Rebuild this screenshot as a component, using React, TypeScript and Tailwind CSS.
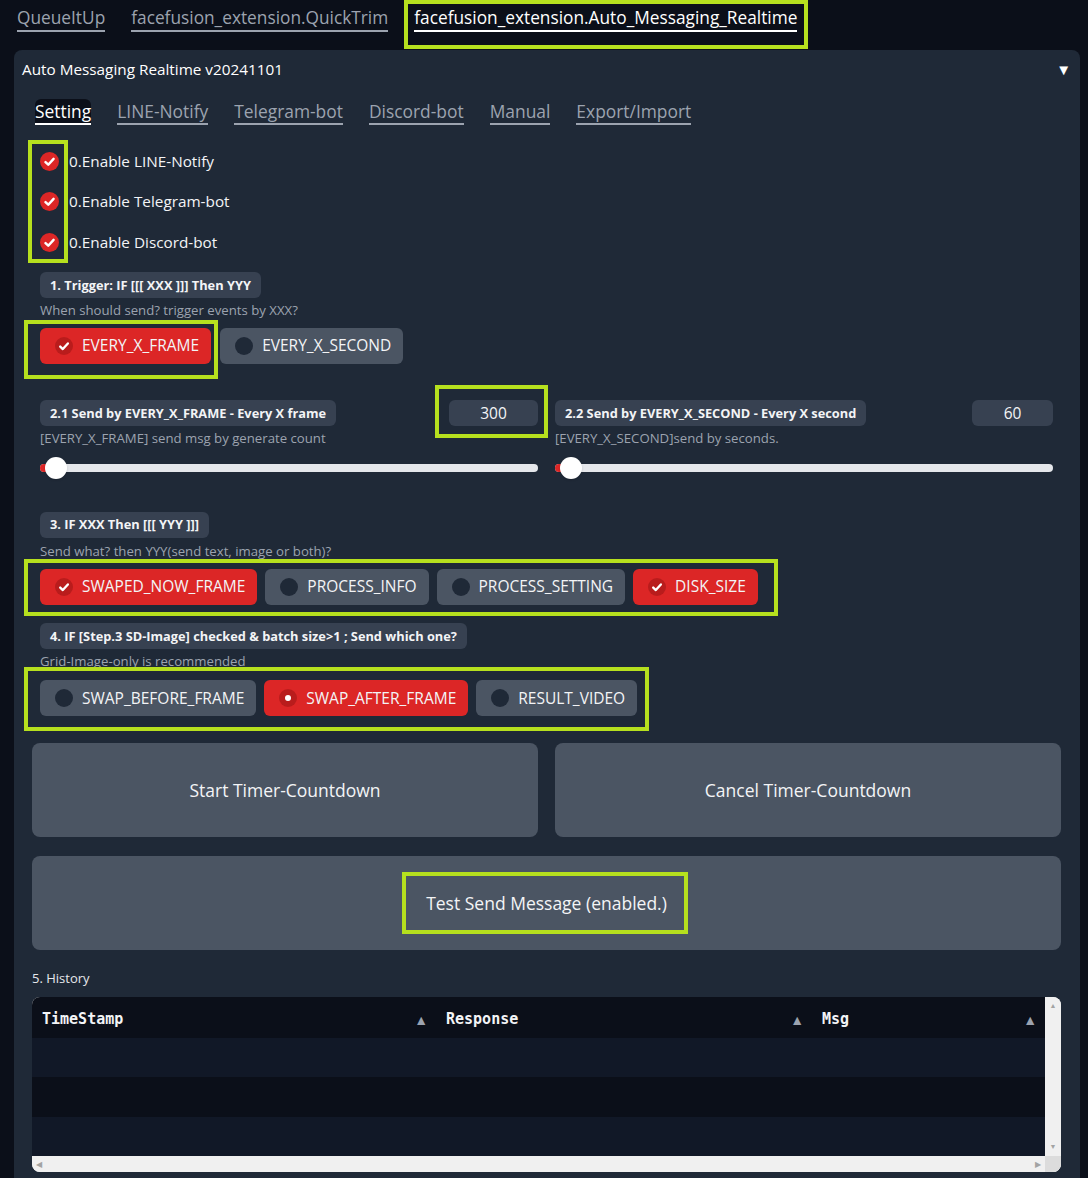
import React from "react";
import clsx from "clsx";

const Check = () => (
  <svg viewBox="0 0 20 20" className="h-full w-full">
    <path
      d="M5.8 10.6l2.9 2.8 5.6-6.2"
      fill="none"
      stroke="white"
      strokeWidth="2.6"
      strokeLinecap="round"
      strokeLinejoin="round"
    />
  </svg>
);

function Option({ label, on, radio }: { label: string; on?: boolean; radio?: boolean }) {
  return (
    <div
      className={clsx(
        "flex h-[36px] items-center gap-[9px] rounded-md pl-[15px] pr-[12px] text-[15.5px] text-[#f3f4f6]",
        on ? "bg-[#dc2626]" : "bg-[#4b5563]"
      )}
    >
      <span
        className={clsx(
          "flex h-[18px] w-[18px] items-center justify-center rounded-full",
          on ? "bg-[#b91c1c]" : "bg-[#1f2937]"
        )}
      >
        {on && (radio ? <span className="h-[6px] w-[6px] rounded-full bg-white" /> : <Check />)}
      </span>
      {label}
    </div>
  );
}

function Label({ children }: { children: React.ReactNode }) {
  return (
    <div className="inline-flex h-[26px] items-center rounded-md bg-[#374151] px-[10px] text-[12.8px] font-bold text-[#f3f4f6]">
      {children}
    </div>
  );
}

function Info({ children }: { children: React.ReactNode }) {
  return <div className="text-[13.2px] leading-[18px] text-[#9ca3af]">{children}</div>;
}

function Slider({ label, info, value, inputW }: { label: string; info: string; value: string; inputW: string }) {
  return (
    <div className="flex flex-col">
      <div className="flex items-start justify-between">
        <Label>{label}</Label>
        <div className="relative">
          <div
            className={clsx(
              "flex h-[26px] items-center justify-center rounded-md bg-[#374151] pt-[1px] text-[15.5px] text-[#f3f4f6]",
              inputW
            )}
          >
            {value}
          </div>
          {value === "300" && (
            <div className="pointer-events-none absolute -left-[14px] -right-[10px] -top-[15px] -bottom-[12px] border-4 border-[#b6e01e]" />
          )}
        </div>
      </div>
      <div className="mt-[3px]">
        <Info>{info}</Info>
      </div>
      <div className="relative mt-[10px] h-[22px]">
        <div className="absolute left-0 right-0 top-[7px] h-[8px] rounded-full bg-[#e5e7eb]" />
        <div className="absolute left-0 top-[7px] h-[8px] w-[10px] rounded-l-full bg-[#dc2626]" />
        <div className="absolute left-[5px] top-0 h-[22px] w-[22px] rounded-full bg-white shadow-sm" />
      </div>
    </div>
  );
}

const HeadCell = ({ children }: { children: string }) => (
  <div className="flex items-center justify-between pl-[10px] pr-[8px] pt-[3px]">
    <span className="font-['DejaVu_Sans_Mono',monospace] text-[15px] font-bold text-[#f3f4f6]">{children}</span>
    <span className="text-[14px] text-[#9ca3af]">▲</span>
  </div>
);

export default function App() {
  return (
    <div className="min-h-screen bg-[#0b0f19] font-['Open_Sans',sans-serif] text-white">
      {/* Top tabs */}
      <div className="flex h-[50px] items-start gap-[26px] pl-[17px] text-[17.3px] leading-[24px]">
        <span className="mt-[6px] border-b-2 border-[#9ca3af] text-[#9ca3af]">QueueItUp</span>
        <span className="mt-[6px] border-b-2 border-[#9ca3af] text-[#9ca3af]">facefusion_extension.QuickTrim</span>
        <span className="relative mt-[6px] border-b-2 border-white text-white">
          facefusion_extension.Auto_Messaging_Realtime
          <span className="pointer-events-none absolute -left-[10px] -right-[11px] -top-[6px] -bottom-[19px] border-4 border-[#b6e01e]" />
        </span>
      </div>

      {/* Panel */}
      <div className="ml-[14px] mr-[8px] rounded-lg bg-[#1f2937] pb-[40px]">
        <div className="flex h-[38px] items-center justify-between pl-[8px] pr-[9px] text-[15.3px] text-white">
          <span>Auto Messaging Realtime v20241101</span>
          <span className="text-[15px]">▼</span>
        </div>

        {/* Sub tabs */}
        <div className="mt-[11px] flex gap-[26px] pl-[21px] text-[17.4px] leading-[24px]">
          <span className="rounded-t-md border-b-2 border-white bg-[#0b0f19] text-white">Setting</span>
          {["LINE-Notify", "Telegram-bot", "Discord-bot", "Manual", "Export/Import"].map((t) => (
            <span key={t} className="border-b-2 border-[#9ca3af] text-[#9ca3af]">
              {t}
            </span>
          ))}
        </div>

        <div className="pl-[18px] pr-[19px]">
          <div className="px-[8px]">
            {/* Enable checkboxes */}
            <div className="relative mt-[16px] flex flex-col">
              {["0.Enable LINE-Notify", "0.Enable Telegram-bot", "0.Enable Discord-bot"].map((t) => (
                <div key={t} className="flex h-[40.5px] items-center gap-[10px] text-[15.3px] text-[#f3f4f6]">
                  <span className="flex h-[19px] w-[19px] items-center justify-center rounded-full bg-[#dc2626]">
                    <Check />
                  </span>
                  {t}
                </div>
              ))}
              <div className="pointer-events-none absolute -left-[12px] -top-[1px] h-[123px] w-[40px] border-4 border-[#b6e01e]" />
            </div>

            {/* 1. Trigger */}
            <div className="mt-[9px]">
              <Label>1. Trigger: IF [[[ XXX ]]] Then YYY</Label>
            </div>
            <div className="mt-[3px]">
              <Info>When should send? trigger events by XXX?</Info>
            </div>
            <div className="mt-[9px] flex gap-[9px]">
              <div className="relative">
                <Option label="EVERY_X_FRAME" on />
                <div className="pointer-events-none absolute -left-[16px] -top-[8px] -right-[7px] -bottom-[15px] border-4 border-[#b6e01e]" />
              </div>
              <Option label="EVERY_X_SECOND" />
            </div>

            {/* 2. Sliders */}
            <div className="mt-[36px] grid grid-cols-2 gap-[17px]">
              <Slider
                label="2.1 Send by EVERY_X_FRAME - Every X frame"
                info="[EVERY_X_FRAME] send msg by generate count"
                value="300"
                inputW="w-[89px]"
              />
              <Slider
                label="2.2 Send by EVERY_X_SECOND - Every X second"
                info="[EVERY_X_SECOND]send by seconds."
                value="60"
                inputW="w-[81px]"
              />
            </div>

            {/* 3. */}
            <div className="mt-[32px]">
              <Label>3. IF XXX Then [[[ YYY ]]]</Label>
            </div>
            <div className="mt-[4px]">
              <Info>Send what? then YYY(send text, image or both)?</Info>
            </div>
            <div className="relative mt-[9px] flex w-fit gap-[8px]">
              <Option label="SWAPED_NOW_FRAME" on />
              <Option label="PROCESS_INFO" />
              <Option label="PROCESS_SETTING" />
              <Option label="DISK_SIZE" on />
              <div className="pointer-events-none absolute -left-[16px] -top-[10px] -right-[20px] -bottom-[11px] border-4 border-[#b6e01e]" />
            </div>

            {/* 4. */}
            <div className="mt-[18px]">
              <Label>4. IF [Step.3 SD-Image] checked &amp; batch size&gt;1 ; Send which one?</Label>
            </div>
            <div className="mt-[3px]">
              <Info>Grid-Image-only is recommended</Info>
            </div>
            <div className="relative mt-[10px] flex w-fit gap-[8px]">
              <Option label="SWAP_BEFORE_FRAME" radio />
              <Option label="SWAP_AFTER_FRAME" radio on />
              <Option label="RESULT_VIDEO" radio />
              <div className="pointer-events-none absolute -left-[16px] -top-[13px] -right-[12px] -bottom-[15px] border-4 border-[#b6e01e]" />
            </div>
          </div>

          {/* Big buttons */}
          <div className="mt-[27px] grid grid-cols-2 gap-[17px]">
            <div className="flex h-[94px] items-center justify-center rounded-lg bg-[#4b5563] text-[17.5px] text-[#f3f4f6]">
              Start Timer-Countdown
            </div>
            <div className="flex h-[94px] items-center justify-center rounded-lg bg-[#4b5563] text-[17.5px] text-[#f3f4f6]">
              Cancel Timer-Countdown
            </div>
          </div>
          <div className="mt-[19px] flex h-[94px] items-center justify-center rounded-lg bg-[#4b5563] text-[17.5px] text-[#f3f4f6]">
            <span className="relative">
              Test Send Message (enabled.)
              <span className="pointer-events-none absolute -left-[24px] -right-[21px] -top-[18px] -bottom-[18px] border-4 border-[#b6e01e]" />
            </span>
          </div>

          {/* 5. History */}
          <div className="mt-[18px] text-[13px] leading-[20px] text-[#e5e7eb]">5. History</div>
          <div className="mt-[9px] flex h-[175px] overflow-hidden rounded-lg bg-[#f0f0f0]">
            <div className="flex flex-1 flex-col">
              <div className="grid h-[41px] grid-cols-[404px_376px_1fr] bg-[#0b0f19]">
                <HeadCell>TimeStamp</HeadCell>
                <HeadCell>Response</HeadCell>
                <HeadCell>Msg</HeadCell>
              </div>
              <div className="h-[39px] bg-[#111827]" />
              <div className="h-[40px] bg-[#0b0f19]" />
              <div className="h-[39px] bg-[#111827]" />
              <div className="flex h-[16px] items-center justify-between bg-[#f0f0f0] px-[4px] text-[8px] text-[#a3a3a3]">
                <span>◀</span>
                <span>▶</span>
              </div>
            </div>
            <div className="flex w-[16px] flex-col bg-[#f0f0f0] text-[7px] text-[#a3a3a3]">
              <div className="flex flex-1 flex-col items-center justify-between py-[4px]">
                <span>▲</span>
                <span>▼</span>
              </div>
              <div className="h-[16px] bg-[#dcdcdc]" />
            </div>
          </div>
        </div>
      </div>
    </div>
  );
}
